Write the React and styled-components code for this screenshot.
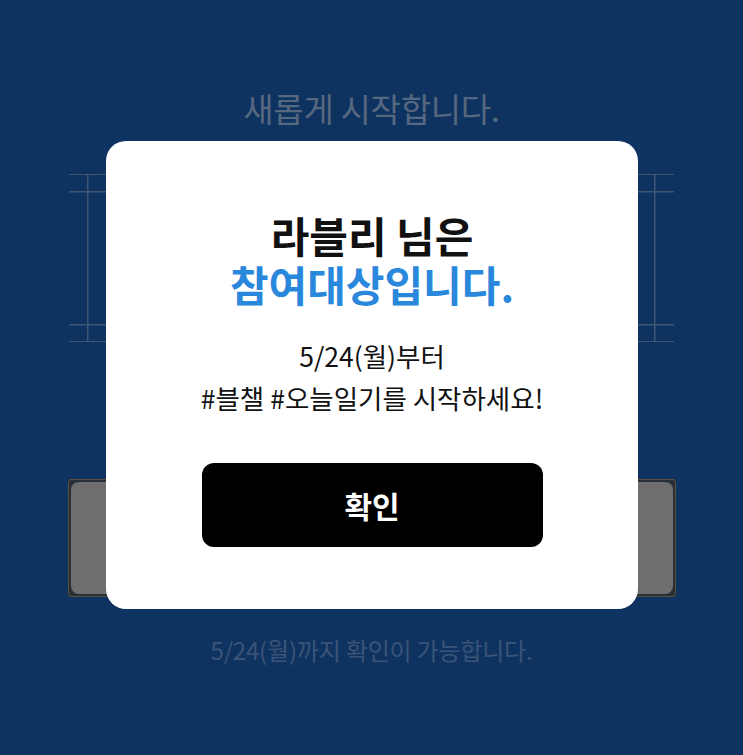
import React from "react";
import styled, { createGlobalStyle } from "styled-components";

const Global = createGlobalStyle`
  html, body { margin: 0; padding: 0; }
  body {
    background: #0e3360;
    font-family: "Noto Sans CJK KR", "Noto Sans", sans-serif;
  }
`;

const Page = styled.div`
  position: relative;
  width: 743px;
  height: 755px;
  background: #0e3360;
  overflow: hidden;
  display: flex;
  flex-direction: column;
  align-items: center;
`;

const Heading = styled.div`
  margin-top: 87px;
  font-size: 33px;
  line-height: 42px;
  color: #56687f;
  letter-spacing: -0.3px;
`;

const Frame = styled.div`
  margin-top: 45px;
  width: 605px;
  height: 166px;
  border-top: 1.5px solid #3f5574;
  border-bottom: 1.5px solid #3f5574;
  background-image:
    linear-gradient(#3f5574, #3f5574),
    linear-gradient(#3f5574, #3f5574),
    linear-gradient(#3f5574, #3f5574),
    linear-gradient(#3f5574, #3f5574);
  background-repeat: no-repeat;
  background-size: 100% 1.5px, 100% 1.5px, 1.5px 100%, 1.5px 100%;
  background-position: 0 16px, 0 calc(100% - 16px), 18px 0, calc(100% - 19px) 0;
`;

const Slot = styled.div`
  margin-top: 137px;
  width: 602px;
  height: 112px;
  padding: 2px;
  background: #2a3038;
  border: 1px solid #5a5038;
  border-radius: 3px;
`;

const SlotFill = styled.div`
  height: 100%;
  background: #6e6e6e;
  border-radius: 8px;
`;

const Note = styled.div`
  margin-top: 37px;
  font-size: 24px;
  line-height: 32px;
  color: #3b5377;
  letter-spacing: -0.2px;
`;

const Modal = styled.div`
  position: absolute;
  left: 106px;
  top: 141px;
  width: 532px;
  height: 468px;
  box-sizing: border-box;
  background: #ffffff;
  border-radius: 20px;
  padding-top: 69px;
  display: flex;
  flex-direction: column;
  align-items: center;
`;

const Title = styled.div`
  font-size: 42px;
  line-height: 49px;
  font-weight: 700;
  color: #111111;
  text-align: center;
`;

const Highlight = styled.span`
  color: #2a88dc;
`;

const Body = styled.div`
  margin-top: 27px;
  font-size: 26.5px;
  line-height: 42px;
  color: #111111;
  text-align: center;
`;

const Confirm = styled.button`
  margin-top: 44px;
  width: 341px;
  height: 84px;
  border: none;
  border-radius: 12px;
  background: #000000;
  color: #ffffff;
  font-family: "Noto Sans CJK KR", "Noto Sans", sans-serif;
  font-size: 30px;
  font-weight: 700;
  cursor: pointer;
`;

export default function App() {
  return (
    <>
      <Global />
      <Page>
        <Heading>새롭게 시작합니다.</Heading>
        <Frame />
        <Slot>
          <SlotFill />
        </Slot>
        <Note>5/24(월)까지 확인이 가능합니다.</Note>
        <Modal>
          <Title>
            라블리 님은
            <br />
            <Highlight>참여대상입니다.</Highlight>
          </Title>
          <Body>
            5/24(월)부터
            <br />
            #블챌 #오늘일기를 시작하세요!
          </Body>
          <Confirm>확인</Confirm>
        </Modal>
      </Page>
    </>
  );
}
